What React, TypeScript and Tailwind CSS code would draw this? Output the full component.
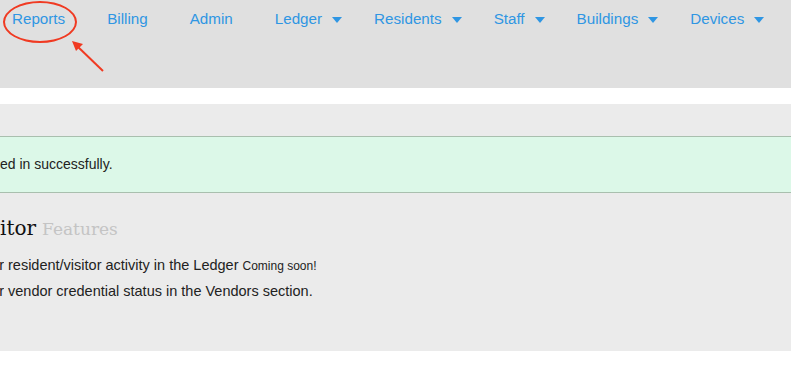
import React from "react";

type NavItem = { label: string; menu?: boolean };

const navItems: NavItem[] = [
  { label: "Reports" },
  { label: "Billing" },
  { label: "Admin" },
  { label: "Ledger", menu: true },
  { label: "Residents", menu: true },
  { label: "Staff", menu: true },
  { label: "Buildings", menu: true },
  { label: "Devices", menu: true },
];

function Caret() {
  return (
    <svg width="10" height="6" viewBox="0 0 10 6" className="ml-[10px] mt-[1px]">
      <path d="M0 0h10L5 6z" fill="currentColor" />
    </svg>
  );
}

function Clipped({ text, width, show = 0 }: { text: string; width: number; show?: number }) {
  return (
    <span
      className="inline-flex justify-end overflow-hidden whitespace-nowrap"
      style={{ width, marginLeft: -(width - show) }}
    >
      {text}
    </span>
  );
}

export default function App() {
  return (
    <div className="relative min-h-[392px] w-[791px] overflow-hidden bg-white">
      {/* top nav */}
      <nav className="h-[88px] bg-[#e0e0e0] font-['Liberation_Sans',Arial,sans-serif]">
        <ul className="flex pl-[12px] pt-[8px] text-[15.2px] leading-[22px] text-[#2f96e3]">
          {navItems.map((item) => (
            <li
              key={item.label}
              className={`flex items-center ${item.menu ? "mr-[32px]" : "mr-[42px]"}`}
            >
              {item.label}
              {item.menu && <Caret />}
            </li>
          ))}
        </ul>
      </nav>

      {/* annotation */}
      <div className="pointer-events-none absolute left-[3px] top-[1px] h-[42px] w-[74px] rounded-[50%] border-2 border-[#f03a22]" />
      <svg className="pointer-events-none absolute left-0 top-0" width="120" height="80">
        <line x1="103" y1="71" x2="76" y2="45" stroke="#f03a22" strokeWidth="2" />
        <path d="M72 41l11 3-7 7z" fill="#f03a22" />
      </svg>

      {/* main panel */}
      <main className="mt-[16px] h-[247px] bg-[#ebebeb] pt-[32px] font-['Liberation_Sans',Arial,sans-serif] text-[#222]">
        <div className="flex h-[57px] items-center border-y border-[#a9bfae] bg-[#dcf8e8] text-[14px]">
          <Clipped text="Logg" width={40} />
          <span>ed in successfully.</span>
        </div>

        <h2 className="mt-[23px] flex items-baseline whitespace-nowrap font-['DejaVu_Serif',serif] text-[20px] leading-[24px] text-[#111]">
          <Clipped text="Vis" width={40} />
          <span>itor</span>
          <span className="ml-[6px] text-[17px] text-[#c4c4c4]">Features</span>
        </h2>

        <ul className="mt-[12px] text-[14.5px] leading-[25px]">
          <li className="flex items-baseline whitespace-nowrap">
            <Clipped text="Monitor" width={60} show={4} />
            <span className="ml-[4px]">resident/visitor activity in the Ledger</span>
            <span className="ml-[4px] text-[12px]">Coming soon!</span>
          </li>
          <li className="flex items-baseline whitespace-nowrap">
            <Clipped text="Monitor" width={60} show={4} />
            <span className="ml-[4px]">vendor credential status in the Vendors section.</span>
          </li>
        </ul>
      </main>
    </div>
  );
}
